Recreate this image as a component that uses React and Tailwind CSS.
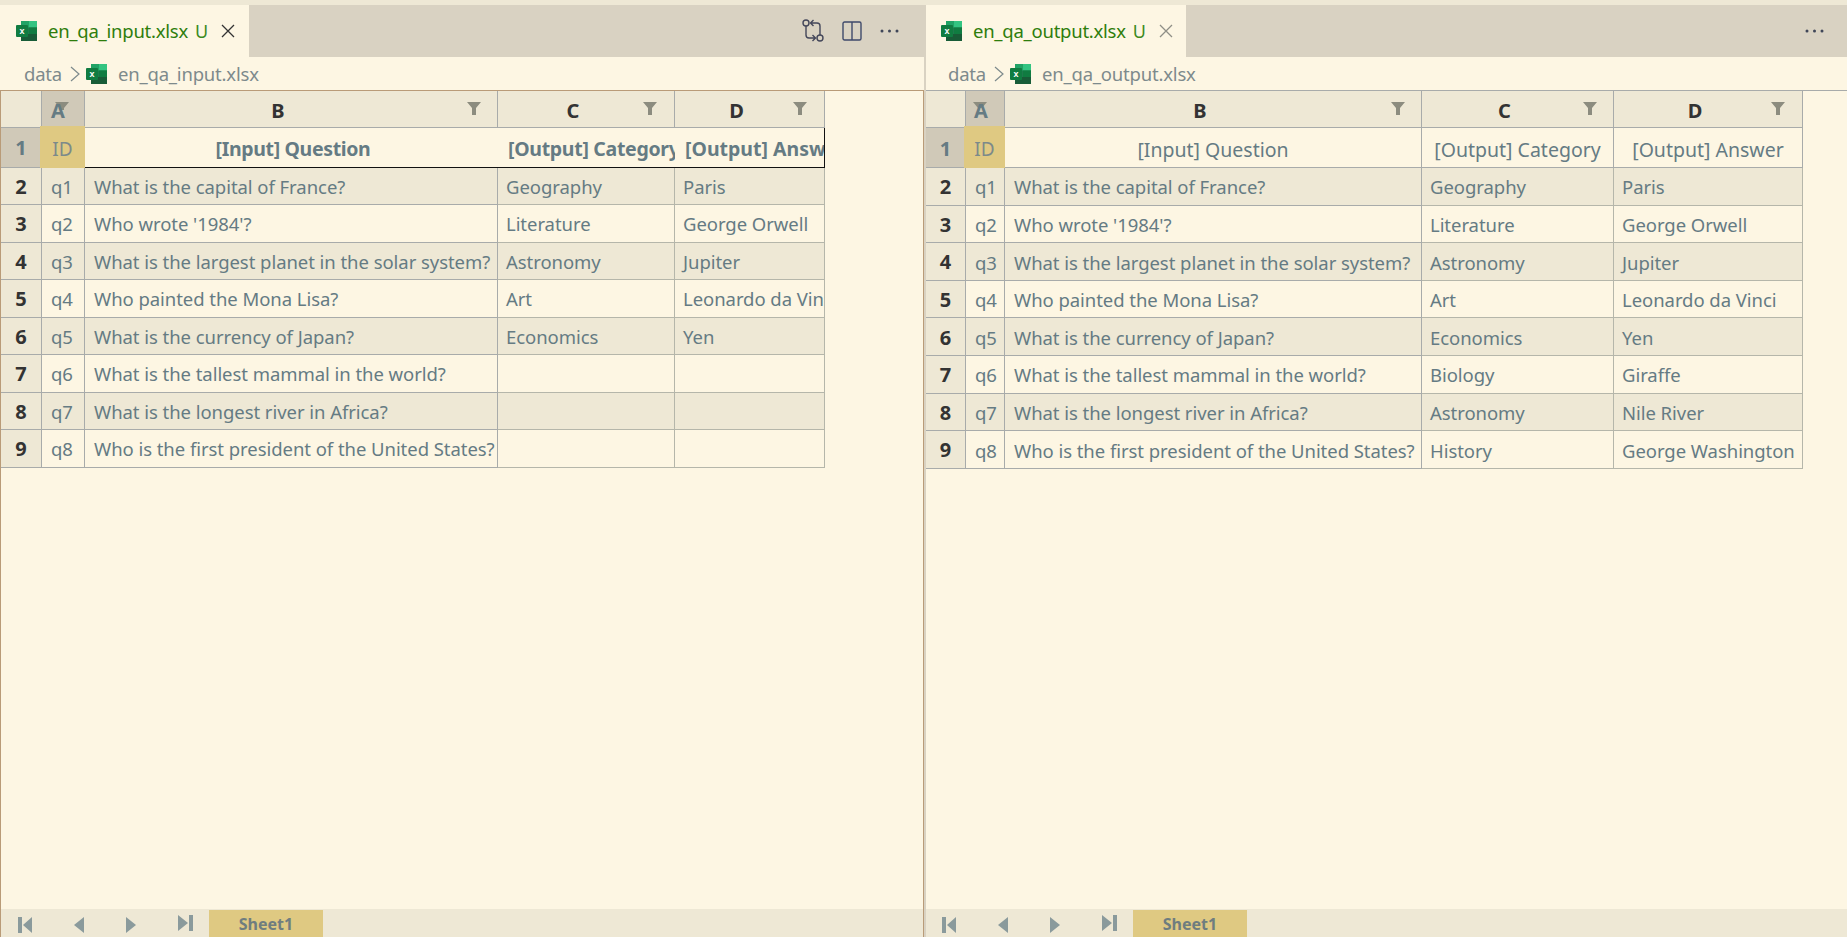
const font = 'font-["Noto_Sans","Open_Sans",sans-serif]';

const rows = [
  ['q1', 'What is the capital of France?', 'Geography', 'Paris'],
  ['q2', "Who wrote '1984'?", 'Literature', 'George Orwell'],
  ['q3', 'What is the largest planet in the solar system?', 'Astronomy', 'Jupiter'],
  ['q4', 'Who painted the Mona Lisa?', 'Art', 'Leonardo da Vinci'],
  ['q5', 'What is the currency of Japan?', 'Economics', 'Yen'],
  ['q6', 'What is the tallest mammal in the world?', '', ''],
  ['q7', 'What is the longest river in Africa?', '', ''],
  ['q8', 'Who is the first president of the United States?', '', ''],
];

const outputRows = rows.map((r, i) => {
  const extra = [['Biology', 'Giraffe'], ['Astronomy', 'Nile River'], ['History', 'George Washington']];
  return i < 5 ? r : [r[0], r[1], extra[i - 5][0], extra[i - 5][1]];
});

const ExcelIcon = () => (
  <svg width="22" height="22" viewBox="0 0 22 22" className="shrink-0">
    <rect x="5" y="1" width="16" height="20" rx="1" fill="#1f7a4d" />
    <rect x="13" y="1" width="8" height="6.5" fill="#33c481" />
    <rect x="5" y="1" width="8" height="6.5" fill="#21a366" />
    <rect x="13" y="7.5" width="8" height="6.5" fill="#107c41" />
    <rect x="5" y="14" width="16" height="7" fill="#185c37" />
    <rect x="0" y="5" width="12" height="12" rx="1" fill="#107c41" />
    <text x="6" y="14" textAnchor="middle" fontSize="9" fontWeight="700" fill="#ffffff" fontFamily="Liberation Sans, sans-serif">x</text>
  </svg>
);

const Funnel = ({ className }) => (
  <svg width="14" height="14" viewBox="0 0 14 14" className={className}>
    <path d="M0 0H14L9 6V13H5V6Z" fill="#8c8c7f" />
  </svg>
);

const CompareIcon = () => (
  <svg width="22" height="24" viewBox="0 0 22 24" fill="none" stroke="#44475a" strokeWidth="1.4" className="shrink-0">
    <circle cx="4" cy="4" r="3" />
    <circle cx="18" cy="19" r="3" />
    <path d="M4 7V16Q4 19 7 19H13M10.500 16L13.500 19L10.500 22" />
    <path d="M18 16V7Q18 4 15 4H9M11.500 1L8.500 4L11.500 7" />
  </svg>
);

const SplitIcon = () => (
  <svg width="20" height="20" viewBox="0 0 20 20" fill="none" stroke="#3f4a6b" strokeWidth="1.4" className="shrink-0">
    <rect x="1" y="1" width="18" height="18" rx="1.500" />
    <path d="M10 1V19" />
  </svg>
);

const Dots = () => (
  <svg width="19" height="4" viewBox="0 0 19 4" fill="#3f4658" className="shrink-0">
    <circle cx="2" cy="2" r="1.500" />
    <circle cx="9.500" cy="2" r="1.500" />
    <circle cx="17" cy="2" r="1.500" />
  </svg>
);

const FirstIcon = () => (
  <svg width="15" height="16" viewBox="0 0 15 16" fill="#8a9a9c"><path d="M0 0H4V16H0ZM14 0V16L5 8Z" /></svg>
);
const PrevIcon = () => (
  <svg width="10" height="16" viewBox="0 0 10 16" fill="#8a9a9c"><path d="M10 0V16L0 8Z" /></svg>
);
const NextIcon = () => (
  <svg width="10" height="16" viewBox="0 0 10 16" fill="#8a9a9c"><path d="M0 0V16L10 8Z" /></svg>
);
const LastIcon = () => (
  <svg width="15" height="16" viewBox="0 0 15 16" fill="#8a9a9c"><path d="M0 0L10 8L0 16ZM11 0H15V16H11Z" /></svg>
);

const SheetBar = ({ shift }) => (
  <div className="absolute bottom-0 left-0 right-0 h-[28px] bg-[#eee8d5]">
    <div className={`absolute inset-y-0 w-[340px] ${shift ? '-left-[2px]' : 'left-0'}`}>
      <div className="absolute top-[8px] left-[18px]"><FirstIcon /></div>
      <div className="absolute top-[8px] left-[74px]"><PrevIcon /></div>
      <div className="absolute top-[8px] left-[126px]"><NextIcon /></div>
      <div className="absolute top-[6px] left-[178px]"><LastIcon /></div>
      <div className="absolute top-[1px] bottom-0 left-[209px] w-[114px] bg-[#dfc982] flex items-center justify-center text-[16px] font-bold text-[#6f7d7f]">
        Sheet1
      </div>
    </div>
  </div>
);

const Tab = ({ name, active, className }) => (
  <div className={`flex h-[52px] items-center bg-[#fdf6e3] ${className}`}>
    <ExcelIcon />
    <span className="ml-[10px] text-[18.500px] tracking-[-0.25px] text-[#2e7d0c]">{name}</span>
    <span className="ml-[7px] text-[18px] text-[#3c8a1e]">U</span>
    <svg width="14" height="14" viewBox="0 0 14 14" fill="none" stroke={active ? '#333333' : '#8f8f86'} strokeWidth="1.3" className="ml-[13px]">
      <path d="M1 1L13 13M13 1L1 13" />
    </svg>
  </div>
);

const Crumbs = ({ name, className }) => (
  <div className={`flex h-[33px] items-center text-[18.500px] tracking-[-0.2px] text-[#7d8a8c] ${className}`}>
    <span>data</span>
    <svg width="10" height="16" viewBox="0 0 10 16" fill="none" stroke="#7d8a8c" strokeWidth="1.200" className="ml-[8px] mr-[6px]">
      <path d="M1 1L9 8L1 15" />
    </svg>
    <ExcelIcon />
    <span className="ml-[10px]">{name}</span>
  </div>
);

const headCell = 'border-r border-b border-[#a8abaa] bg-[#eee8d5] relative text-center font-bold text-[20px] text-[#333333] p-0';
const rowHead = 'border-r border-b border-[#a8abaa] bg-[#eee8d5] text-center font-bold text-[20px] text-[#333333] px-0 pb-0 pt-[2px]';
const cell = 'border-r border-b border-[#b5b6aa] px-[8px] pb-0 pt-[2px] text-[18.500px] tracking-[-0.05px] text-[#657b83] whitespace-nowrap overflow-hidden';
const keyCell = 'border-r border-b border-[#a8abaa] pl-[9px] pr-0 pb-0 pt-[2px] text-[18.500px] tracking-[-0.05px] text-[#657b83] whitespace-nowrap overflow-hidden';
const boldCell = 'pr-0 pb-0 pt-[3px] text-[19.500px] font-bold text-[#657b83] whitespace-nowrap overflow-hidden';
const plainCell = 'border-r border-b border-[#a8abaa] px-0 pb-0 pt-[5px] text-center text-[19.500px] text-[#657b83] whitespace-nowrap';

const ColHead = ({ label, filterClass }) => (
  <th className={headCell}>
    <span className="relative top-[2px] -left-[13px]">{label}</span>
    <Funnel className={`absolute top-[11px] ${filterClass}`} />
  </th>
);

const IdCell = () => (
  <td className="relative border-b border-[#a8abaa] p-0 text-center text-[19px] text-[#7c8a8a]">
    <div className="absolute -left-[2px] right-0 -top-[2px] -bottom-[1px] flex items-center justify-center bg-[#dfc982] pt-[4px]">ID</div>
  </td>
);

const InputSheet = () => (
  <table className="absolute left-[1px] top-[91px] table-fixed border-separate border-spacing-0 w-[824px]">
    <colgroup>
      <col className="w-[41px]" />
      <col className="w-[43px]" />
      <col className="w-[413px]" />
      <col className="w-[177px]" />
      <col className="w-[150px]" />
    </colgroup>
    <tbody>
      <tr className="h-[37px]">
        <th className={headCell} />
        <th className={`${headCell} !bg-[#d0c9b8] !text-[#657b83]`}>
          <svg width="14" height="8" viewBox="0 0 14 8" className="absolute left-[13px] top-[11px]">
            <path d="M0 0H14L9 6V8H5V6Z" fill="#8c8c7f" />
          </svg>
          <span className="relative top-[2px] -left-[5px]">A</span>
        </th>
        <ColHead label="B" filterClass="right-[16px]" />
        <ColHead label="C" filterClass="right-[17px]" />
        <ColHead label="D" filterClass="right-[17px]" />
      </tr>
      <tr className="h-[39.500px]">
        <th className={`${rowHead} !bg-[#d0c9b8] !text-[#657b83]`}>1</th>
        <IdCell />
        <td className={`border-b border-[#111111] pl-[3px] text-center tracking-[-0.35px] ${boldCell}`}>[Input] Question</td>
        <td className={`border-b border-[#111111] pl-[10px] tracking-[-0.3px] ${boldCell}`}>[Output] Category</td>
        <td className={`border-b border-r border-[#111111] pl-[10px] ${boldCell}`}>[Output] Answer</td>
      </tr>
      {rows.map((r, i) => (
        <tr key={r[0]} className={`h-[37.500px] ${i % 2 === 0 ? 'bg-[#eee8d5]' : ''}`}>
          <th className={rowHead}>{i + 2}</th>
          <td className={keyCell}>{r[0]}</td>
          <td className={keyCell}>{r[1]}</td>
          <td className={cell}>{r[2]}</td>
          <td className={cell}>{r[3]}</td>
        </tr>
      ))}
    </tbody>
  </table>
);

const OutputSheet = () => (
  <table className="absolute left-0 top-[91px] table-fixed border-separate border-spacing-0 w-[877px]">
    <colgroup>
      <col className="w-[40px]" />
      <col className="w-[39px]" />
      <col className="w-[417px]" />
      <col className="w-[192px]" />
      <col className="w-[189px]" />
    </colgroup>
    <tbody>
      <tr className="h-[37px]">
        <th className={headCell} />
        <th className={`${headCell} !bg-[#d0c9b8] !text-[#657b83]`}>
          <svg width="14" height="6" viewBox="0 0 14 6" className="absolute left-[7px] top-[11px]">
            <path d="M0 0H14L9 6H5Z" fill="#8c8c7f" />
          </svg>
          <span className="relative top-[2px] -left-[4px]">A</span>
        </th>
        <ColHead label="B" filterClass="right-[16px]" />
        <ColHead label="C" filterClass="right-[16px]" />
        <ColHead label="D" filterClass="right-[17px]" />
      </tr>
      <tr className="h-[40px]">
        <th className={`${rowHead} !bg-[#d0c9b8] !text-[#657b83]`}>1</th>
        <IdCell />
        <td className={plainCell}>[Input] Question</td>
        <td className={plainCell}>[Output] Category</td>
        <td className={plainCell}>[Output] Answer</td>
      </tr>
      {outputRows.map((r, i) => (
        <tr key={r[0]} className={`h-[37.600px] ${i % 2 === 0 ? 'bg-[#eee8d5]' : ''}`}>
          <th className={rowHead}>{i + 2}</th>
          <td className={keyCell}>{r[0]}</td>
          <td className={keyCell}>{r[1]}</td>
          <td className={cell}>{r[2]}</td>
          <td className={cell}>{r[3]}</td>
        </tr>
      ))}
    </tbody>
  </table>
);

export default function App() {
  return (
    <div className={`relative h-[937px] w-[1847px] overflow-hidden bg-[#fdf6e3] ${font}`}>
      <div className="absolute inset-x-0 top-0 h-[5px] bg-[#eee8d5]" />

      {/* left editor */}
      <div className="absolute left-0 top-0 bottom-0 w-[924px]">
        <div className="absolute inset-x-0 top-[5px] flex h-[52px] items-center bg-[#d9d2c2]">
          <Tab name="en_qa_input.xlsx" active className="w-[249px] pl-[16px]" />
          <div className="ml-auto mr-[25px] flex items-center gap-[18px]">
            <CompareIcon />
            <SplitIcon />
            <Dots />
          </div>
        </div>
        <div className="absolute inset-x-0 top-[57px]"><Crumbs name="en_qa_input.xlsx" className="pl-[24px]" /></div>
        <InputSheet />
        <SheetBar />
        <div className="absolute inset-x-0 top-[90px] h-px bg-[#b99b78]" />
        <div className="absolute left-0 top-[90px] bottom-0 w-px bg-[#b99b78]" />
        <div className="absolute right-0 top-[90px] bottom-0 w-px bg-[#b99b78]" />
      </div>

      {/* sash */}
      <div className="absolute left-[924px] top-[5px] bottom-0 w-[2px] bg-[#d9d2c2]" />

      {/* right editor */}
      <div className="absolute left-[926px] top-0 bottom-0 right-0">
        <div className="absolute inset-x-0 top-[5px] flex h-[52px] items-center bg-[#d9d2c2]">
          <Tab name="en_qa_output.xlsx" className="w-[260px] pl-[15px]" />
          <div className="ml-auto mr-[23px] flex items-center"><Dots /></div>
        </div>
        <div className="absolute inset-x-0 top-[57px]"><Crumbs name="en_qa_output.xlsx" className="pl-[22px]" /></div>
        <div className="absolute inset-x-0 top-[90px] h-px bg-[#a8abaa]" />
        <OutputSheet />
        <SheetBar shift />
      </div>
    </div>
  );
}
